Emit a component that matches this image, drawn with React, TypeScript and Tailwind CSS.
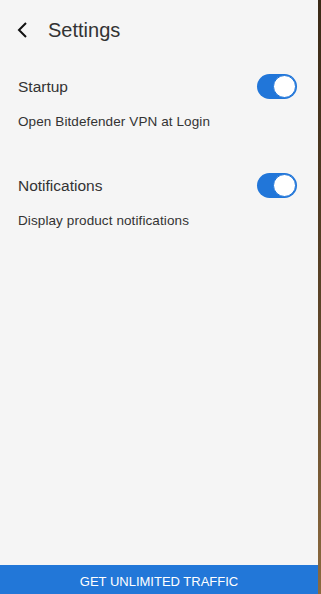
import React from 'react';

const Toggle = () => (
  <div className="w-[40px] h-[25px] rounded-full bg-[#2176d9] relative shrink-0">
    <div className="absolute right-[1px] top-[1px] w-[23px] h-[23px] rounded-full bg-white border border-[#2176d9]" />
  </div>
);

const SettingRow = ({ title, desc }: { title: string; desc: string }) => (
  <div className="flex flex-col">
    <div className="flex items-center justify-between pl-[18px] pr-[21px] h-[25px]">
      <span className="text-[15.5px] text-[#333]">{title}</span>
      <Toggle />
    </div>
    <div className="pl-[18px] mt-[13px] text-[13.5px] text-[#333] tracking-[0.1px]">{desc}</div>
  </div>
);

export default function App() {
  return (
    <div className="flex w-[321px] h-[594px]" style={{ fontFamily: '"Liberation Sans", Arial, sans-serif' }}>
      <div className="w-[318px] h-full bg-[#f5f5f5] flex flex-col">
        <div className="flex items-center h-[60px] pl-[16px] gap-[18px]">
          <svg width="14" height="18" viewBox="0 0 14 18" fill="none" stroke="#111" strokeWidth="2">
            <path d="M10 2 L3 9 L10 16" />
          </svg>
          <span className="text-[20px] text-[#333]">Settings</span>
        </div>
        <div className="flex flex-col gap-[41px] mt-[14px]">
          <SettingRow title="Startup" desc="Open Bitdefender VPN at Login" />
          <SettingRow title="Notifications" desc="Display product notifications" />
        </div>
        <div className="flex-1" />
        <button className="h-[29px] w-full bg-[#2277d8] text-white text-[13px] flex items-center justify-center pt-[4px]">
          GET UNLIMITED TRAFFIC
        </button>
      </div>
      <div className="w-[3px] h-full bg-gradient-to-b from-[#3a2a17] via-[#5a4327] to-[#8c6a3f]" />
    </div>
  );
}
